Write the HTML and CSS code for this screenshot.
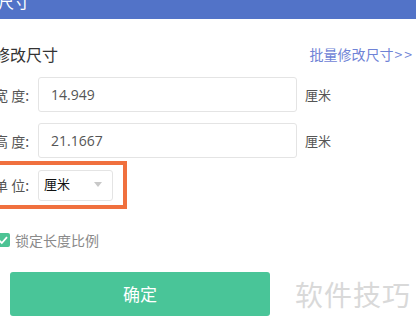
FILE: index.html
```html
<!DOCTYPE html>
<html lang="zh">
<head>
<meta charset="utf-8">
<link rel="stylesheet" href="styles.css">
</head>
<body>
<div class="header"><span class="header-title">尺寸</span></div>
<div class="page">
  <div class="title-row">
    <span class="title">修改尺寸</span>
    <span class="batch-link">批量修改尺寸<span class="arrows">&gt;&gt;</span></span>
  </div>
  <div class="field-row">
    <span class="label">宽 度:</span>
    <div class="input">14.949</div>
    <span class="unit">厘米</span>
  </div>
  <div class="field-row">
    <span class="label">高 度:</span>
    <div class="input">21.1667</div>
    <span class="unit">厘米</span>
  </div>
  <div class="unit-box">
    <span class="label">单 位:</span>
    <div class="select">
      <span class="select-value">厘米</span>
      <svg class="caret" width="8" height="6" viewBox="0 0 8 6"><path d="M0 0 L8 0 L4 5 Z" fill="#c8c8c8"/></svg>
    </div>
  </div>
  <div class="check-row">
    <span class="checkbox">
      <svg width="14" height="14" viewBox="0 0 14 14"><path d="M3 7.2 L5.8 10 L11 4.2" fill="none" stroke="#fff" stroke-width="1.8"/></svg>
    </span>
    <span class="check-label">锁定长度比例</span>
  </div>
  <div class="bottom-row">
    <div class="button">确定</div>
    <span class="watermark">软件技巧</span>
  </div>
</div>
</body>
</html>
```
FILE: styles.css
```css
html, body {
  margin: 0;
  padding: 0;
  background: #fff;
  overflow: hidden;
  font-family: "Noto Sans CJK SC", "Noto Sans", sans-serif;
}
.header {
  height: 19px;
  background: #5273c8;
  overflow: hidden;
}
.header-title {
  display: block;
  color: #fff;
  font-size: 16px;
  line-height: 16px;
  margin-top: -7px;
  margin-left: -2px;
}
.page {
  margin-left: -6px;
  width: 422px;
}
.title-row {
  display: flex;
  justify-content: space-between;
  align-items: center;
  margin-top: 24px;
  height: 22px;
}
.title {
  font-size: 16px;
  color: #333;
  line-height: 22px;
}
.batch-link {
  font-size: 14px;
  color: #6f83d6;
  margin-right: 2px;
  line-height: 22px;
}
.arrows {
  letter-spacing: 2px;
  margin-left: 1px;
}
.field-row {
  display: flex;
  align-items: center;
  margin-top: 12px;
  height: 35px;
}
.field-row + .field-row {
  margin-top: 11px;
}
.label {
  width: 44px;
  margin-left: 0;
  font-size: 14px;
  color: #555;
  white-space: pre;
}
.input {
  box-sizing: border-box;
  width: 259px;
  height: 35px;
  border: 1px solid #e4e4e4;
  border-radius: 3px;
  padding-left: 12px;
  line-height: 33px;
  font-family: "Open Sans", "Noto Sans", sans-serif;
  font-size: 14px;
  color: #555;
}
.unit {
  margin-left: 8px;
  font-size: 13px;
  color: #555;
}
.unit-box {
  display: flex;
  align-items: center;
  box-sizing: border-box;
  width: 133px;
  height: 48px;
  margin-top: 3px;
  border: 4px solid #f0703e;
  border-left: none;
}
.select {
  box-sizing: border-box;
  width: 75px;
  height: 31px;
  border: 1px solid #e4e4e4;
  border-radius: 3px;
  display: flex;
  align-items: center;
  justify-content: space-between;
  padding: 0 10px 0 5px;
}
.select-value {
  font-size: 13px;
  color: #111;
  line-height: 20px;
  margin-top: -3px;
}
.caret {
  display: block;
}
.check-row {
  display: flex;
  align-items: center;
  margin-top: 23px;
  margin-left: 2px;
  height: 16px;
}
.checkbox {
  width: 14px;
  height: 14px;
  background: #4cc394;
  border-radius: 2px;
  display: block;
}
.checkbox svg {
  display: block;
}
.check-label {
  margin-left: 5px;
  font-size: 14px;
  color: #8a8a8a;
}
.bottom-row {
  display: flex;
  align-items: center;
  margin-top: 24px;
  margin-left: 16px;
}
.button {
  width: 260px;
  height: 44px;
  background: #49c598;
  border-radius: 3px;
  color: #fff;
  font-size: 17px;
  text-align: center;
  line-height: 44px;
}
.watermark {
  margin-left: 25px;
  font-size: 28px;
  color: #d9d9d9;
  letter-spacing: 1px;
  white-space: nowrap;
}
```
